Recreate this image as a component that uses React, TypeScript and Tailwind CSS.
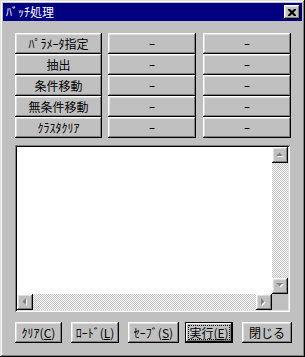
import React from 'react'

const raised =
  'bg-[#c0c0c0] shadow-[inset_-1px_-1px_#000,inset_1px_1px_#fff,inset_-2px_-2px_#808080,inset_2px_2px_#dfdfdf]'

const track = 'bg-[repeating-conic-gradient(#c0c0c0_0%_25%,#ffffff_0%_50%)] bg-[length:2px_2px]'

const Arrow = ({ dir }: { dir: 'up' | 'down' | 'left' | 'right' }) => {
  const pts: Record<string, string> = {
    up: '0,4 7,4 3.5,0.5',
    down: '0,0 7,0 3.5,3.5',
    left: '4,0 4,7 0.5,3.5',
    right: '0,0 0,7 3.5,3.5',
  }
  const vertical = dir === 'up' || dir === 'down'
  return (
    <svg width={vertical ? 9 : 6} height={vertical ? 6 : 9} viewBox={vertical ? '0 0 9 6' : '0 0 6 9'}>
      <polygon points={pts[dir]} transform="translate(1 1)" fill="#ffffff" />
      <polygon points={pts[dir]} fill="#808080" />
    </svg>
  )
}

const ScrollBtn = ({ dir }: { dir: 'up' | 'down' | 'left' | 'right' }) => (
  <div className={`w-[16px] h-[16px] shrink-0 flex items-center justify-center ${raised}`}>
    <Arrow dir={dir} />
  </div>
)

const rows = ['ﾊﾟﾗﾒｰﾀ指定', '抽出', '条件移動', '無条件移動', 'ｸﾗｽﾀｸﾘｱ']

const App = () => {
  return (
    <div className="w-[305px] h-[357px] bg-[#c0c0c0] p-[3px] font-['Noto_Sans_CJK_JP',sans-serif] text-[12px] text-black shadow-[inset_-1px_-1px_#000,inset_1px_1px_#dfdfdf,inset_-2px_-2px_#808080,inset_2px_2px_#fff]">
      {/* Title bar */}
      <div className="h-[18px] bg-[#000080] flex items-center justify-between pl-[3px] pr-[2px]">
        <span className="text-white text-[12px] leading-none">ﾊﾞｯﾁ処理</span>
        <div className={`w-[16px] h-[14px] flex items-center justify-center ${raised}`}>
          <svg width="8" height="7" viewBox="0 0 8 7">
            <path d="M0 0h2l2 2 2-2h2v1l-2.5 2.5L8 6v1H6L4 5 2 7H0V6l2.5-2.5L0 1z" fill="#000" />
          </svg>
        </div>
      </div>

      <div className="pl-[12px] pt-[12px]">
        {/* Command grid */}
        <div className="grid grid-cols-[87px_88px_89px] gap-x-[6px]">
          {rows.map((label) => (
            <React.Fragment key={label}>
              <div className={`h-[21px] flex items-center justify-center leading-none ${raised}`}>{label}</div>
              <div className={`h-[21px] flex items-center justify-center leading-none ${raised}`}>ｰ</div>
              <div className={`h-[21px] flex items-center justify-center leading-none ml-[1px] ${raised}`}>ｰ</div>
            </React.Fragment>
          ))}
        </div>

        {/* List box */}
        <div className="mt-[7px] w-[275px] h-[167px] p-[2px] bg-[#c0c0c0] shadow-[inset_1px_1px_#808080,inset_-1px_-1px_#fff,inset_2px_2px_#000,inset_-2px_-2px_#dfdfdf] flex flex-col">
          <div className="flex flex-1">
            <div className="flex-1 bg-white" />
            <div className="w-[16px] flex flex-col">
              <ScrollBtn dir="up" />
              <div className={`flex-1 ${track}`} />
              <ScrollBtn dir="down" />
            </div>
          </div>
          <div className="h-[16px] flex">
            <ScrollBtn dir="left" />
            <div className={`flex-1 ${track}`} />
            <ScrollBtn dir="right" />
            <div className="w-[16px] bg-[#c0c0c0]" />
          </div>
        </div>

        {/* Bottom buttons */}
        <div className="mt-[10px] flex">
          <div className={`w-[47px] h-[21px] flex items-center justify-center leading-none whitespace-nowrap ${raised}`}>
            ｸﾘｱ(<u>C</u>)
          </div>
          <div className={`ml-[9px] w-[48px] h-[21px] flex items-center justify-center leading-none whitespace-nowrap ${raised}`}>
            ﾛｰﾄﾞ(<u>L</u>)
          </div>
          <div className={`ml-[9px] w-[51px] h-[21px] flex items-center justify-center leading-none whitespace-nowrap ${raised}`}>
            ｾｰﾌﾞ(<u>S</u>)
          </div>
          <div className="ml-[6px] w-[48px] h-[21px] p-[1px] bg-black">
            <div className="w-full h-full bg-[#c0c0c0] shadow-[inset_-1px_-1px_#000,inset_1px_1px_#fff,inset_-2px_-2px_#808080] p-[2px]">
              <div className="w-full h-full border border-dotted border-black flex items-center justify-center leading-none whitespace-nowrap">
                実行(<u>E</u>)
              </div>
            </div>
          </div>
          <div className={`ml-[9px] w-[50px] h-[21px] flex items-center justify-center leading-none whitespace-nowrap ${raised}`}>
            閉じる
          </div>
        </div>
      </div>
    </div>
  )
}

export default App
